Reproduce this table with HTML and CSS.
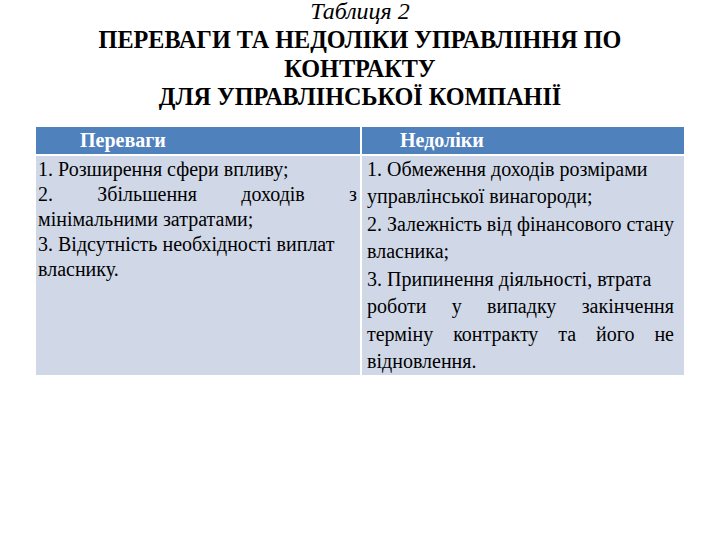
FILE: index.html
```html
<!DOCTYPE html>
<html lang="uk">
<head>
<meta charset="utf-8">
<title>Таблиця 2</title>
<link rel="stylesheet" href="styles.css">
</head>
<body>
<div class="page">
  <header class="title">
    <div class="caption">Таблиця 2</div>
    <h1 class="heading">ПЕРЕВАГИ ТА НЕДОЛІКИ УПРАВЛІННЯ ПО<br>КОНТРАКТУ<br>ДЛЯ УПРАВЛІНСЬКОЇ КОМПАНІЇ</h1>
  </header>
  <div class="table">
    <div class="th th-left">Переваги</div>
    <div class="th th-right">Недоліки</div>
    <div class="td td-left">
      <div class="ln">1. Розширення сфери впливу;</div>
      <div class="ln just">2. Збільшення доходів з</div>
      <div class="ln">мінімальними затратами;</div>
      <div class="ln">3. Відсутність необхідності виплат</div>
      <div class="ln">власнику.</div>
    </div>
    <div class="td td-right">
      <div class="ln">1. Обмеження доходів розмірами</div>
      <div class="ln">управлінської винагороди;</div>
      <div class="ln">2. Залежність від фінансового стану</div>
      <div class="ln">власника;</div>
      <div class="ln">3. Припинення діяльності, втрата</div>
      <div class="ln just">роботи у випадку закінчення</div>
      <div class="ln just">терміну контракту та його не</div>
      <div class="ln">відновлення.</div>
    </div>
  </div>
</div>
</body>
</html>
```
FILE: styles.css
```css
html, body {
  margin: 0;
  padding: 0;
  background: #ffffff;
}
.page {
  width: 720px;
  height: 540px;
  overflow: hidden;
  font-family: "Liberation Serif", "Times New Roman", serif;
  color: #000;
}
.title {
  text-align: center;
}
.caption {
  font-style: italic;
  font-size: 24px;
  line-height: 22px;
}
.heading {
  margin: 4px 0 0;
  font-weight: bold;
  font-size: 24.2px;
  line-height: 28.5px;
}
.table {
  margin: 15px 0 0 36px;
  width: 648px;
  display: grid;
  grid-template-columns: 324px 322px;
  grid-template-rows: 27px 219px;
  gap: 2px;
}
.th {
  background: #4f81bd;
  color: #fff;
  font-weight: bold;
  font-size: 20px;
  line-height: 27px;
}
.th-left { padding-left: 44px; }
.th-right { padding-left: 38px; }
.td {
  background: #d0d8e8;
  font-size: 20px;
  line-height: 25px;
  padding-top: 1px;
}
.td-left { padding-left: 2px; padding-right: 3px; }
.td-right { padding-left: 5px; padding-right: 10px; padding-top: 0; line-height: 27.5px; }
.ln { white-space: nowrap; }
.just {
  text-align: justify;
  text-align-last: justify;
  white-space: normal;
}
```
